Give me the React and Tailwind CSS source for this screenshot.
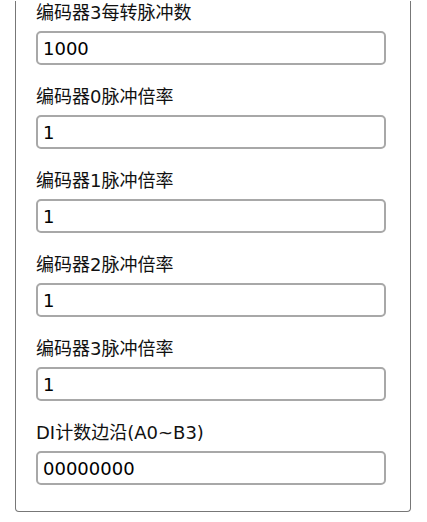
import React from 'react';

const fields = [
  { label: '编码器3每转脉冲数', value: '1000' },
  { label: '编码器0脉冲倍率', value: '1' },
  { label: '编码器1脉冲倍率', value: '1' },
  { label: '编码器2脉冲倍率', value: '1' },
  { label: '编码器3脉冲倍率', value: '1' },
  { label: 'DI计数边沿(A0~B3)', value: '00000000' },
];

const Field = ({ label, value }) => (
  <div className="flex flex-col">
    <label className="text-[18px] leading-[24px] text-[#111]">{label}</label>
    <input
      type="text"
      defaultValue={value}
      className="mt-[6px] h-[34px] w-[350px] rounded-[5px] border-2 border-[#a8a8a8] bg-white px-[5px] text-[18px] text-black outline-none"
    />
  </div>
);

export default function App() {
  return (
    <div
      className="min-h-[522px] bg-white pt-[1px]"
      style={{ fontFamily: '"DejaVu Sans", "Noto Sans CJK SC", sans-serif' }}
    >
      <div className="mx-[15px] w-[396px] rounded-b-[4px] border-x border-b border-[#777] pb-[26px] pl-[20px] pr-[24px]">
        <div className="flex flex-col gap-[20px]">
          {fields.map((f) => (
            <Field key={f.label} label={f.label} value={f.value} />
          ))}
        </div>
      </div>
    </div>
  );
}
